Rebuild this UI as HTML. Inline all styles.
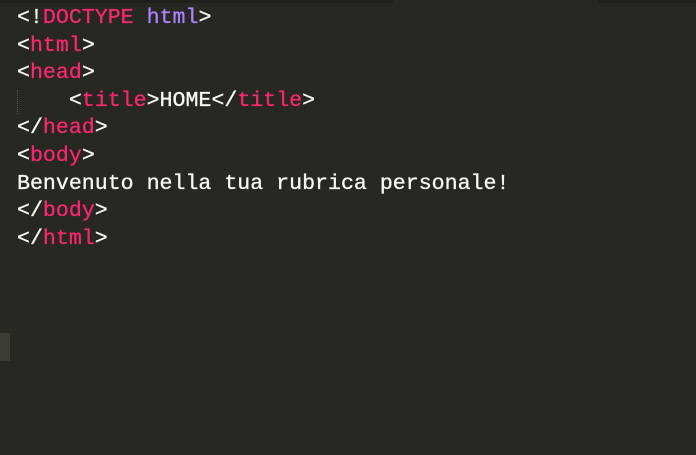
<!DOCTYPE html>
<html><head><style>
html,body{margin:0;padding:0;width:696px;height:455px;background:#272822;overflow:hidden}
.top{position:absolute;left:0;top:0;width:696px;height:3px;background:#1f201b}
.top2{position:absolute;left:393px;top:0;width:205px;height:3px;background:#272822}
pre{position:absolute;left:17px;top:5px;margin:0;font-family:"Liberation Mono",monospace;font-size:21.6px;line-height:27.6px;color:#f8f8f2;-webkit-text-stroke:0.3px currentColor}
.t{color:#f92672}.p{color:#ae81ff}
.guide{position:absolute;left:17px;top:90px;height:24px;border-left:1px dotted #555}
.mark{position:absolute;left:0;top:333px;width:10px;height:28px;background:#3b3c33}
</style></head><body>
<div class="top"></div><div class="top2"></div>
<div class="guide"></div><div class="mark"></div>
<pre>&lt;!<span class="t">DOCTYPE</span> <span class="p">html</span>&gt;
&lt;<span class="t">html</span>&gt;
&lt;<span class="t">head</span>&gt;
    &lt;<span class="t">title</span>&gt;HOME&lt;/<span class="t">title</span>&gt;
&lt;/<span class="t">head</span>&gt;
&lt;<span class="t">body</span>&gt;
Benvenuto nella tua rubrica personale!
&lt;/<span class="t">body</span>&gt;
&lt;/<span class="t">html</span>&gt;</pre>
</body></html>
